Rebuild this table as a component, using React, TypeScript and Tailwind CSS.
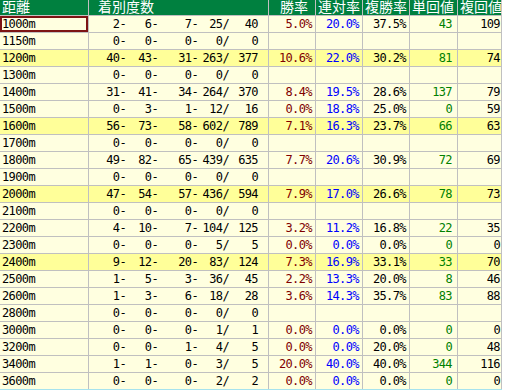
import React from 'react';

type Row = {
  dist: string;
  counts: [string, string, string, string, string];
  win?: string;
  rentai?: string;
  fukusho?: string;
  tan?: string;
  fuku?: string;
  hl?: boolean;
};

const rows: Row[] = [
  { dist: '1000m', counts: ['2', '6', '7', '25', '40'], win: '5.0%', rentai: '20.0%', fukusho: '37.5%', tan: '43', fuku: '109' },
  { dist: '1150m', counts: ['0', '0', '0', '0', '0'] },
  { dist: '1200m', counts: ['40', '43', '31', '263', '377'], win: '10.6%', rentai: '22.0%', fukusho: '30.2%', tan: '81', fuku: '74', hl: true },
  { dist: '1300m', counts: ['0', '0', '0', '0', '0'] },
  { dist: '1400m', counts: ['31', '41', '34', '264', '370'], win: '8.4%', rentai: '19.5%', fukusho: '28.6%', tan: '137', fuku: '79' },
  { dist: '1500m', counts: ['0', '3', '1', '12', '16'], win: '0.0%', rentai: '18.8%', fukusho: '25.0%', tan: '0', fuku: '59' },
  { dist: '1600m', counts: ['56', '73', '58', '602', '789'], win: '7.1%', rentai: '16.3%', fukusho: '23.7%', tan: '66', fuku: '63', hl: true },
  { dist: '1700m', counts: ['0', '0', '0', '0', '0'] },
  { dist: '1800m', counts: ['49', '82', '65', '439', '635'], win: '7.7%', rentai: '20.6%', fukusho: '30.9%', tan: '72', fuku: '69' },
  { dist: '1900m', counts: ['0', '0', '0', '0', '0'] },
  { dist: '2000m', counts: ['47', '54', '57', '436', '594'], win: '7.9%', rentai: '17.0%', fukusho: '26.6%', tan: '78', fuku: '73', hl: true },
  { dist: '2100m', counts: ['0', '0', '0', '0', '0'] },
  { dist: '2200m', counts: ['4', '10', '7', '104', '125'], win: '3.2%', rentai: '11.2%', fukusho: '16.8%', tan: '22', fuku: '35' },
  { dist: '2300m', counts: ['0', '0', '0', '5', '5'], win: '0.0%', rentai: '0.0%', fukusho: '0.0%', tan: '0', fuku: '0' },
  { dist: '2400m', counts: ['9', '12', '20', '83', '124'], win: '7.3%', rentai: '16.9%', fukusho: '33.1%', tan: '33', fuku: '70', hl: true },
  { dist: '2500m', counts: ['1', '5', '3', '36', '45'], win: '2.2%', rentai: '13.3%', fukusho: '20.0%', tan: '8', fuku: '46' },
  { dist: '2600m', counts: ['1', '3', '6', '18', '28'], win: '3.6%', rentai: '14.3%', fukusho: '35.7%', tan: '83', fuku: '88' },
  { dist: '2800m', counts: ['0', '0', '0', '0', '0'] },
  { dist: '3000m', counts: ['0', '0', '0', '1', '1'], win: '0.0%', rentai: '0.0%', fukusho: '0.0%', tan: '0', fuku: '0' },
  { dist: '3200m', counts: ['0', '0', '1', '4', '5'], win: '0.0%', rentai: '0.0%', fukusho: '20.0%', tan: '0', fuku: '48' },
  { dist: '3400m', counts: ['1', '1', '0', '3', '5'], win: '20.0%', rentai: '40.0%', fukusho: '40.0%', tan: '344', fuku: '116' },
  { dist: '3600m', counts: ['0', '0', '0', '2', '2'], win: '0.0%', rentai: '0.0%', fukusho: '0.0%', tan: '0', fuku: '0' },
];

const headers = ['距離', '着別度数', '勝率', '連対率', '複勝率', '単回値', '複回値'];

const mono = "font-['DejaVu_Sans_Mono',monospace] text-[12px] tracking-[-0.6px] leading-[16px]";

const App: React.FC = () => {
  return (
    <div className="w-[505px] h-[392px] bg-white">
      <div className="w-[502px] grid grid-cols-[88px_179px_46px_46px_46px_47px_43px] gap-px bg-[#c0c0c0] pr-px">
        {headers.map((h, i) => (
          <div
            key={h}
            className={`h-[15px] bg-[#00803f] text-white font-['Liberation_Sans','Noto_Sans_CJK_JP',sans-serif] text-[14px] leading-[15px] whitespace-nowrap ${
              i === 1 ? 'pl-[9px]' : i === 2 ? 'pl-[11px]' : 'pl-[2px]'
            }`}
          >
            {h}
          </div>
        ))}
        {rows.map((r, idx) => {
          const bg = r.hl ? 'bg-[#ffff99]' : 'bg-[#ffffe0]';
          return (
            <React.Fragment key={r.dist}>
              <div
                className={`h-[16px] ${bg} ${mono} pl-[2px] text-black ${
                  idx === 0 ? 'shadow-[inset_0_0_0_2px_#7d1414]' : ''
                }`}
              >
                {r.dist}
              </div>
              <div className={`h-[16px] ${bg} ${mono} flex text-black whitespace-pre`}>
                <span className="w-[37px] text-right">{r.counts[0]}-</span>
                <span className="w-[32px] text-right">{r.counts[1]}-</span>
                <span className="w-[40px] text-right">{r.counts[2]}-</span>
                <span className="w-[31px] text-right">{r.counts[3]}/</span>
                <span className="w-[29px] text-right">{r.counts[4]}</span>
              </div>
              <div className={`h-[16px] ${bg} ${mono} text-right pr-[3px] text-[#800000]`}>{r.win}</div>
              <div className={`h-[16px] ${bg} ${mono} text-right pr-[3px] text-[#0000ff]`}>{r.rentai}</div>
              <div className={`h-[16px] ${bg} ${mono} text-right pr-[3px] text-black`}>{r.fukusho}</div>
              <div className={`h-[16px] ${bg} ${mono} text-right pr-[5px] text-[#008000]`}>{r.tan}</div>
              <div className={`h-[16px] ${bg} ${mono} text-right pr-[1px] text-black`}>{r.fuku}</div>
            </React.Fragment>
          );
        })}
      </div>
      <div className="w-[502px] h-px bg-[#a6e3ee]" />
    </div>
  );
};

export default App;
